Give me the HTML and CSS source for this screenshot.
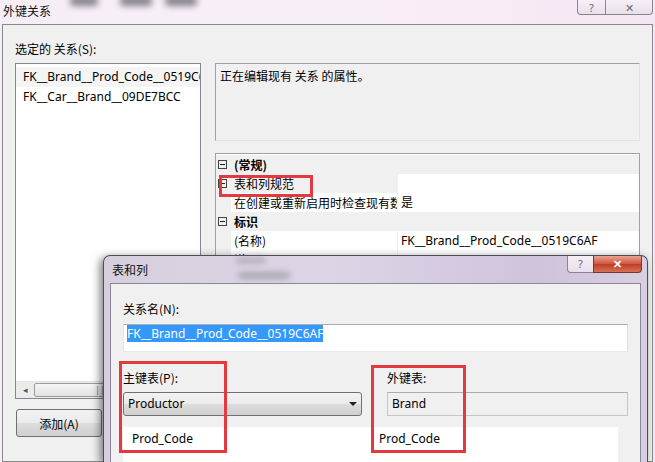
FILE: index.html
```html
<!DOCTYPE html>
<html lang="zh-CN">
  <head>
    <meta charset="UTF-8" />
    <title>外键关系</title>
    <link rel="stylesheet" href="styles.css">
  </head>
  <body>
    <div class="desktop">
      <div class="win main">
        <div class="titlebar">
          <span class="glass g1"></span>
          <span class="glass g2"></span>
          <span class="glass g3"></span>
          <span class="title">外键关系</span>
          <div class="caption">
            <span class="cap help">?</span>
            <span class="cap close">✕</span>
          </div>
        </div>

        <div class="client">
          <div class="left">
            <div class="lbl">选定的 关系(S):</div>
            <div class="listbox">
              <div class="item selected">FK__Brand__Prod_Code__0519C6AF</div>
              <div class="item">FK__Car__Brand__09DE7BCC</div>
              <div class="hscroll">
                <span class="arrow">◂</span>
                <span class="thumb"><span class="grip">|||</span></span>
              </div>
            </div>
            <button class="btn">添加(A)</button>
          </div>

          <div class="right">
            <div class="desc">正在编辑现有 关系 的属性。</div>
            <div class="propgrid">
              <div class="row cat">
                <span class="margin"><i class="exp"></i></span>
                <span class="name">(常规)</span>
              </div>
              <div class="row">
                <span class="margin"><i class="exp"></i></span>
                <span class="name sel">表和列规范</span>
                <span class="value"></span>
              </div>
              <div class="row">
                <span class="margin"></span>
                <span class="name">在创建或重新启用时检查现有数据</span>
                <span class="value">是</span>
              </div>
              <div class="row cat">
                <span class="margin"><i class="exp"></i></span>
                <span class="name">标识</span>
              </div>
              <div class="row">
                <span class="margin"></span>
                <span class="name">(名称)</span>
                <span class="value">FK__Brand__Prod_Code__0519C6AF</span>
              </div>
              <div class="row">
                <span class="margin"></span>
                <span class="name">说明</span>
                <span class="value"></span>
              </div>
            </div>
          </div>
        </div>
      </div>

      <div class="win dlg">
        <div class="titlebar">
          <span class="glass g4"></span>
          <span class="glass g5"></span>
          <span class="title">表和列</span>
          <div class="caption">
            <span class="cap help">?</span>
            <span class="cap close red">✕</span>
          </div>
        </div>
        <div class="client">
          <div class="lbl">关系名(N):</div>
          <div class="textbox"><span class="hl">FK__Brand__Prod_Code__0519C6AF</span></div>

          <div class="cols">
            <div class="col pk">
              <div class="lbl">主键表(P):</div>
              <div class="combo">Productor<span class="drop"></span></div>
            </div>
            <div class="col fk">
              <div class="lbl">外键表:</div>
              <div class="readonly">Brand</div>
            </div>
          </div>

          <div class="grid">
            <span class="cell c1">Prod_Code</span>
            <span class="cell c2">Prod_Code</span>
          </div>
        </div>
      </div>

      <!-- red marks drawn over the screenshot -->
      <div class="mark m1"></div>
      <div class="mark m2"></div>
      <div class="mark m3"></div>
    </div>
  </body>
</html>
```

FILE: styles.css
```css
* {
  margin: 0;
  padding: 0;
  box-sizing: border-box;
}

body {
  width: 655px;
  height: 462px;
  overflow: hidden;
  font-family: "Noto Sans", "Noto Sans CJK SC", sans-serif;
  font-size: 12px;
  line-height: 16px;
  color: #000;
  background: #f3e8f2;
}

.desktop {
  position: relative;
  width: 655px;
  height: 462px;
  overflow: hidden;
}

/* window chrome */
.titlebar {
  position: relative;
  flex-shrink: 0;
  display: flex;
  justify-content: space-between;
  align-items: flex-start;
}

.title {
  position: relative;
  font-family: "Noto Sans CJK SC", sans-serif;
  color: #111;
}

.glass {
  position: absolute;
  background: #6d6a72;
  border-radius: 4px;
  filter: blur(3px);
  opacity: 0.8;
}

.caption {
  position: relative;
  display: flex;
}

.cap {
  display: flex;
  align-items: center;
  justify-content: center;
  border: 1px solid #8b8392;
  border-top: none;
  background: linear-gradient(#f6eff6, #e9e0ea);
  color: #6b6870;
  font-size: 11px;
  line-height: 12px;
}

.cap.help {
  border-radius: 0 0 0 4px;
  border-right: none;
}

.cap.close {
  border-radius: 0 0 4px 0;
}

/* main window */
.main {
  height: 462px;
  padding: 0 2px;
  display: flex;
  flex-direction: column;
  background: linear-gradient(to right, #f6eef6, #f9eef8 60%, #f4e6f2);
}

.main > .titlebar {
  height: 24px;
}

.main .title {
  padding: 3px 0 0 1px;
}

.main .cap {
  height: 15px;
  padding-top: 1px;
}

.main .cap.help {
  width: 28px;
}

.main .cap.close {
  width: 48px;
}

.g1 { left: 68px; top: -4px; width: 28px; height: 10px; }
.g2 { left: 118px; top: -4px; width: 32px; height: 10px; }
.g3 { left: 163px; top: -4px; width: 32px; height: 10px; }

.client {
  flex: 1;
  border: 1px solid #8a8a8a;
  background: #f0f0f0;
  overflow: hidden;
}

.main .client {
  display: flex;
  gap: 14px;
  padding: 16px 12px 0 12px;
}

.left {
  width: 186px;
}

.lbl {
  font-family: "Noto Sans CJK SC", sans-serif;
  height: 16px;
}

.listbox {
  margin-top: 6px;
  height: 336px;
  border: 1px solid #828790;
  background: #fff;
  display: flex;
  flex-direction: column;
  padding-top: 3px;
  overflow: hidden;
}

.item {
  height: 20px;
  line-height: 20px;
  padding-left: 7px;
  white-space: nowrap;
  overflow: hidden;
}

.item.selected {
  background: #f4f4f4;
}

.hscroll {
  margin-top: auto;
  height: 17px;
  display: flex;
  align-items: stretch;
  background: #ebebeb;
  border-top: 1px solid #e2e2e2;
}

.arrow {
  width: 18px;
  font-size: 9px;
  color: #555;
  text-align: center;
  line-height: 15px;
}

.thumb {
  flex: 1;
  margin: 1px 0;
  border: 1px solid #9c9c9c;
  border-radius: 2px;
  background: linear-gradient(#f5f5f5, #e2e2e2);
  font-size: 9px;
  line-height: 12px;
  color: #777;
  padding-left: 60px;
}

.btn {
  margin: 10px 0 0 1px;
  width: 86px;
  height: 28px;
  font-family: "Noto Sans CJK SC", sans-serif;
  font-size: 12px;
  border: 1px solid #707070;
  border-radius: 3px;
  background: linear-gradient(#f2f2f2 0%, #ebebeb 50%, #dddddd 51%, #cfcfcf 100%);
  color: #000;
}

.right {
  width: 425px;
  margin-top: 22px;
}

.desc {
  height: 78px;
  border: 1px solid #a0a0a0;
  border-right-color: #e3e3e3;
  border-bottom-color: #e3e3e3;
  background: #f0f0f0;
  padding: 4px 4px;
  font-family: "Noto Sans CJK SC", sans-serif;
}

.propgrid {
  margin-top: 12px;
  height: 246px;
  border: 1px solid #a0a0a0;
  background: #fff;
  padding-top: 1px;
}

.row {
  display: flex;
  height: 19px;
  line-height: 19px;
}

.row .margin {
  width: 15px;
  background: #f0f0f0;
  position: relative;
}

.exp {
  position: absolute;
  left: 2px;
  top: 5px;
  width: 9px;
  height: 9px;
  border: 1px solid #444;
}

.exp::after {
  content: "";
  position: absolute;
  left: 1px;
  top: 3px;
  width: 5px;
  height: 1px;
  background: #222;
}

.row .name {
  width: 167px;
  padding-left: 3px;
  white-space: nowrap;
  overflow: hidden;
  font-family: "Noto Sans CJK SC", sans-serif;
  border-right: 1px solid #f0f0f0;
}

.row .name.sel {
  background: #f0f0f0;
}

.row .value {
  flex: 1;
  padding-left: 3px;
  white-space: nowrap;
  font-family: "Noto Sans", "Noto Sans CJK SC", sans-serif;
}

.row.cat {
  background: #f0f0f0;
}

.row.cat .name {
  flex: 1;
  font-weight: bold;
  border: none;
}

/* tables and columns dialog */
.dlg {
  position: absolute;
  left: 103px;
  top: 255px;
  width: 545px;
  height: 207px;
  padding: 0 6px;
  border: 1px solid #4e4b58;
  border-bottom: none;
  border-radius: 7px 7px 0 0;
  background: linear-gradient(to right, #d6cfdd, #ddd5e6 40%, #cfc3db 80%, #d8cfe2);
  box-shadow: -3px 2px 9px rgba(0, 0, 0, 0.5);
  display: flex;
  flex-direction: column;
}

.dlg > .titlebar {
  height: 27px;
}

.dlg .title {
  padding: 6px 0 0 2px;
}

.dlg .caption {
  margin-right: -1px;
}

.dlg .cap {
  height: 17px;
}

.dlg .cap.help {
  width: 26px;
}

.dlg .cap.close {
  width: 49px;
}

.cap.red {
  border-color: #6d3a36;
  background: linear-gradient(#e9a493, #d0553d 50%, #c13a24 51%, #d7725a);
  color: #fff;
  font-weight: bold;
}

.g4 { left: 126px; top: 2px; width: 30px; height: 5px; opacity: 0.45; }
.g5 { left: 128px; top: 16px; width: 52px; height: 7px; opacity: 0.45; }

.dlg .client {
  border-color: #8a8898;
  border-bottom: none;
  padding: 17px 12px 0 12px;
}

.textbox {
  margin-top: 7px;
  width: 505px;
  height: 28px;
  border: 1px solid #abadb3;
  border-right-color: #dbdfe6;
  border-bottom-color: #e3e9ef;
  border-left-color: #e2e3ea;
  background: #fff;
  padding: 1px 3px;
}

.hl {
  background: #3399ff;
  color: #fff;
}

.cols {
  display: flex;
  gap: 25px;
  margin-top: 18px;
}

.col.pk {
  width: 239px;
}

.col.fk {
  width: 241px;
}

.combo {
  position: relative;
  margin-top: 6px;
  height: 24px;
  line-height: 22px;
  padding-left: 4px;
  border: 1px solid #707070;
  border-radius: 3px;
  background: linear-gradient(#f2f2f2 0%, #ebebeb 50%, #dddddd 51%, #cfcfcf 100%);
}

.drop {
  position: absolute;
  right: 4px;
  top: 9px;
  border-left: 4px solid transparent;
  border-right: 4px solid transparent;
  border-top: 4px solid #222;
}

.readonly {
  margin-top: 6px;
  height: 24px;
  line-height: 22px;
  padding-left: 4px;
  border: 1px solid #c5c5c5;
  border-top-color: #abadb3;
  background: #f0f0f0;
}

.grid {
  margin-top: 11px;
  width: 495px;
  height: 40px;
  background: #fff;
  display: flex;
  padding-top: 4px;
}

.cell {
  line-height: 16px;
}

.c1 {
  width: 248px;
  padding-left: 9px;
}

.c2 {
  padding-left: 8px;
}

/* red annotation boxes */
.mark {
  position: absolute;
  border: 3px solid #e23a3f;
}

.m1 { left: 219px; top: 175px; width: 94px; height: 22px; }
.m2 { left: 119px; top: 361px; width: 108px; height: 92px; }
.m3 { left: 371px; top: 365px; width: 95px; height: 88px; }
```
